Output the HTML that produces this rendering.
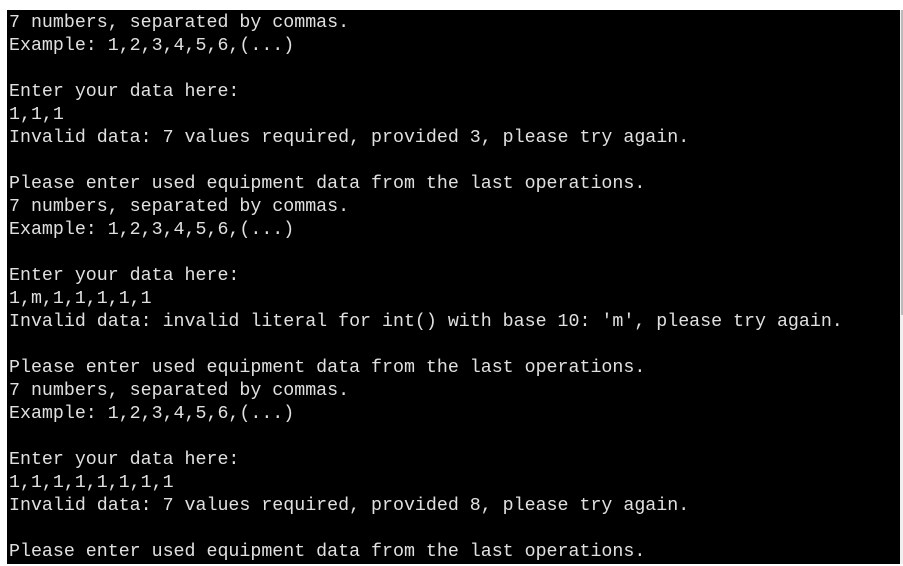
<!DOCTYPE html>
<html><head><style>
html,body{margin:0;padding:0;background:#fff;width:903px;height:566px;overflow:hidden}
#t{position:absolute;left:7px;top:10px;width:893px;height:554px;background:#000;overflow:hidden}
pre{margin:0;padding:2px 0 0 2px;font-family:"Liberation Mono",monospace;font-size:18.3px;line-height:23px;color:#e0e0e0}
#sb{position:absolute;left:900px;top:10px;width:3px;height:554px;background:#f0f0f0}
#th{position:absolute;left:901px;top:10px;width:2px;height:305px;background:#bbb}
</style></head><body>
<div id="t"><pre>7 numbers, separated by commas.
Example: 1,2,3,4,5,6,(...)

Enter your data here:
1,1,1
Invalid data: 7 values required, provided 3, please try again.

Please enter used equipment data from the last operations.
7 numbers, separated by commas.
Example: 1,2,3,4,5,6,(...)

Enter your data here:
1,m,1,1,1,1,1
Invalid data: invalid literal for int() with base 10: 'm', please try again.

Please enter used equipment data from the last operations.
7 numbers, separated by commas.
Example: 1,2,3,4,5,6,(...)

Enter your data here:
1,1,1,1,1,1,1,1
Invalid data: 7 values required, provided 8, please try again.

Please enter used equipment data from the last operations.</pre></div>
<div id="sb"></div><div id="th"></div>
</body></html>
